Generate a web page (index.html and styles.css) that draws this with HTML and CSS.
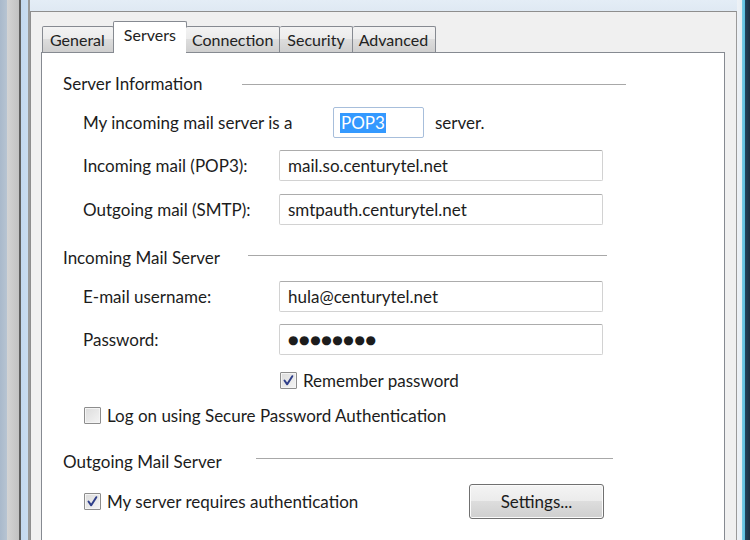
FILE: index.html
```html
<!DOCTYPE html>
<html>
<head>
<meta charset="utf-8">
<link rel="stylesheet" href="styles.css">
</head>
<body>
<div class="screen">
  <div class="frame-left"></div>
  <div class="center">
    <div class="titlebar"></div>
    <div class="dialog">
      <div class="tabs">
        <div class="tab tab-first">General</div>
        <div class="tab tab-selected">Servers</div>
        <div class="tab">Connection</div>
        <div class="tab tab-security">Security</div>
        <div class="tab tab-advanced">Advanced</div>
      </div>
      <div class="panel">
        <div class="heading heading-info">
          <span class="heading-text">Server Information</span>
          <span class="rule"></span>
        </div>
        <div class="row row-type">
          <span class="label label-type">My incoming mail server is a</span>
          <span class="typebox"><span class="selected-text">POP3</span></span>
          <span class="suffix">server.</span>
        </div>
        <div class="row row-gap12">
          <span class="label">Incoming mail (POP3):</span>
          <span class="input">mail.so.centurytel.net</span>
        </div>
        <div class="row row-gap13">
          <span class="label">Outgoing mail (SMTP):</span>
          <span class="input">smtpauth.centurytel.net</span>
        </div>

        <div class="heading heading-incoming">
          <span class="heading-text">Incoming Mail Server</span>
          <span class="rule"></span>
        </div>
        <div class="row row-gap13">
          <span class="label">E-mail username:</span>
          <span class="input">hula@centurytel.net</span>
        </div>
        <div class="row row-gap12">
          <span class="label">Password:</span>
          <span class="input input-password">●●●●●●●●</span>
        </div>
        <div class="check-row check-remember">
          <span class="checkbox checked">
            <svg viewBox="0 0 17 17" width="17" height="17"><path d="M4.5 8.5 L7.2 12.3 L12.3 4.2" fill="none" stroke="#2f3f8a" stroke-width="2" stroke-linejoin="round" stroke-linecap="round"/></svg>
          </span>
          <span class="check-label">Remember password</span>
        </div>
        <div class="check-row check-spa">
          <span class="checkbox"></span>
          <span class="check-label">Log on using Secure Password Authentication</span>
        </div>

        <div class="heading heading-outgoing">
          <span class="heading-text">Outgoing Mail Server</span>
          <span class="rule"></span>
        </div>
        <div class="auth-row">
          <div class="check-row check-auth">
            <span class="checkbox checked">
              <svg viewBox="0 0 17 17" width="17" height="17"><path d="M4.5 8.5 L7.2 12.3 L12.3 4.2" fill="none" stroke="#2f3f8a" stroke-width="2" stroke-linejoin="round" stroke-linecap="round"/></svg>
            </span>
            <span class="check-label">My server requires authentication</span>
          </div>
          <button class="button">Settings...</button>
        </div>
      </div>
    </div>
  </div>
  <div class="frame-right"></div>
</div>
</body>
</html>
```

FILE: styles.css
```css
html, body {
  margin: 0;
  padding: 0;
  width: 750px;
  height: 540px;
  overflow: hidden;
}

body {
  font-family: Lato, "Open Sans", sans-serif;
  font-size: 17px;
  color: #1c1c1c;
}

.screen {
  display: flex;
  width: 750px;
  height: 540px;
}

.frame-left {
  width: 30px;
  flex: none;
  background: linear-gradient(to right,
    #a9b9cb 0, #b7c4d2 7px,
    #d4d4d4 7px, #c2c2c2 19px,
    #5e5e5e 19px, #5e5e5e 21px,
    #c3d8ef 21px, #c9dcf0 28px,
    #9a9a9a 28px, #9a9a9a 30px);
}

.frame-right {
  width: 13px;
  flex: none;
  background: linear-gradient(to right,
    #eef2f6 0, #e8eef4 5px,
    #7fcbe6 5px, #58bfe2 8px,
    #24445e 8px, #1c2e42 13px);
}

.center {
  flex: 1;
  display: flex;
  flex-direction: column;
  min-width: 0;
}

.titlebar {
  height: 11px;
  flex: none;
  background: linear-gradient(to bottom, #e4edf6, #dfe9f3);
}

.dialog {
  flex: 1;
  background: #f0f0f0;
  border-top: 1px solid #8e8e8e;
  border-left: 1px solid #8e8e8e;
  border-right: 1px solid #9a9a9a;
  padding: 10px 11px 0 10px;
  display: flex;
  flex-direction: column;
}

.tabs {
  display: flex;
  align-items: flex-end;
  height: 30px;
  padding-left: 1px;
  position: relative;
  z-index: 1;
}

.tab {
  height: 25px;
  line-height: 26px;
  padding: 0 6px;
  border: 1px solid #868a91;
  border-bottom: none;
  border-left: none;
  background: linear-gradient(to bottom, #f3f3f3 0, #ebebeb 50%, #dddddd 50%, #cfcfcf 100%);
  font-size: 16px;
  color: #222;
  border-radius: 2px 2px 0 0;
}

.tab-first {
  border-left: 1px solid #868a91;
  padding: 0 8px 0 7px;
}

.tab-security {
  padding: 0 7px;
}

.tab-advanced {
  padding: 0 7px 0 6px;
}

.tab-selected {
  height: 31px;
  line-height: 26px;
  background: #ffffff;
  border-left: 1px solid #868a91;
  margin-left: -1px;
  margin-right: -1px;
  margin-bottom: -1px;
  padding: 0 10px;
}

.panel {
  flex: 1;
  background: #ffffff;
  border: 1px solid #868a91;
  border-bottom: none;
  padding: 21px 0 0 21px;
}

.heading {
  display: flex;
  align-items: center;
  height: 20px;
  line-height: 20px;
}

.heading .rule {
  height: 1px;
  background: #a8a8a8;
}

.heading-info .rule {
  margin-left: 40px;
  width: 384px;
}

.heading-incoming {
  margin-top: 23px;
}

.heading-incoming .rule {
  margin-left: 28px;
  width: 359px;
  position: relative;
  top: -3px;
}

.heading-outgoing {
  margin-top: 27px;
}

.heading-outgoing .rule {
  margin-left: 34px;
  width: 357px;
  position: relative;
  top: -4px;
}

.row {
  display: flex;
  align-items: center;
  height: 31px;
  padding-left: 20px;
}

.row-type {
  margin-top: 13px;
}

.row-gap12 {
  margin-top: 12px;
}

.row-gap13 {
  margin-top: 13px;
}

.heading + .row {
  margin-top: 13px;
}

.label {
  width: 196px;
  flex: none;
}

.label-type {
  width: 250px;
}

.typebox {
  border: 1px solid #a7bedb;
  border-radius: 2px;
  display: flex;
  align-items: center;
  padding-left: 6px;
  box-sizing: border-box;
  width: 91px;
  height: 31px;
}

.selected-text {
  background: #3399ff;
  color: #ffffff;
  line-height: 20px;
  padding: 0 1px;
}

.suffix {
  margin-left: 11px;
}

.input {
  box-sizing: border-box;
  width: 324px;
  height: 31px;
  border: 1px solid #d2d2d2;
  border-top-color: #acacac;
  border-radius: 2px;
  padding-left: 8px;
  display: flex;
  align-items: center;
}

.input-password {
  font-size: 12px;
  letter-spacing: 0.6px;
  font-family: "DejaVu Sans", sans-serif;
}

.check-row {
  display: flex;
  align-items: center;
  height: 20px;
}

.check-remember {
  margin-top: 15px;
  padding-left: 217px;
}

.check-spa {
  margin-top: 15px;
  padding-left: 21px;
}

.checkbox {
  box-sizing: border-box;
  width: 17px;
  height: 17px;
  border: 1px solid #8d8d8d;
  border-radius: 1px;
  background: linear-gradient(135deg, #dcdcdc, #f4f4f4);
  box-shadow: inset 0 0 0 1px #f4f4f4;
  display: flex;
  align-items: center;
  justify-content: center;
  flex: none;
}

.checkbox svg {
  display: block;
  margin: -1px;
}

.check-label {
  margin-left: 6px;
}

.auth-row {
  display: flex;
  align-items: center;
  margin-top: 12px;
  height: 35px;
  padding-left: 21px;
}

.check-auth {
  width: 385px;
}

.button {
  box-sizing: border-box;
  width: 135px;
  height: 35px;
  border: 1px solid #707070;
  border-radius: 3px;
  background: linear-gradient(to bottom, #f4f4f4 0, #ebebeb 50%, #dddddd 50%, #cfcfcf 100%);
  box-shadow: inset 0 0 0 1px #fbfbfb;
  font-family: Lato, "Open Sans", sans-serif;
  font-size: 17px;
  color: #1c1c1c;
  padding: 0;
}
```
